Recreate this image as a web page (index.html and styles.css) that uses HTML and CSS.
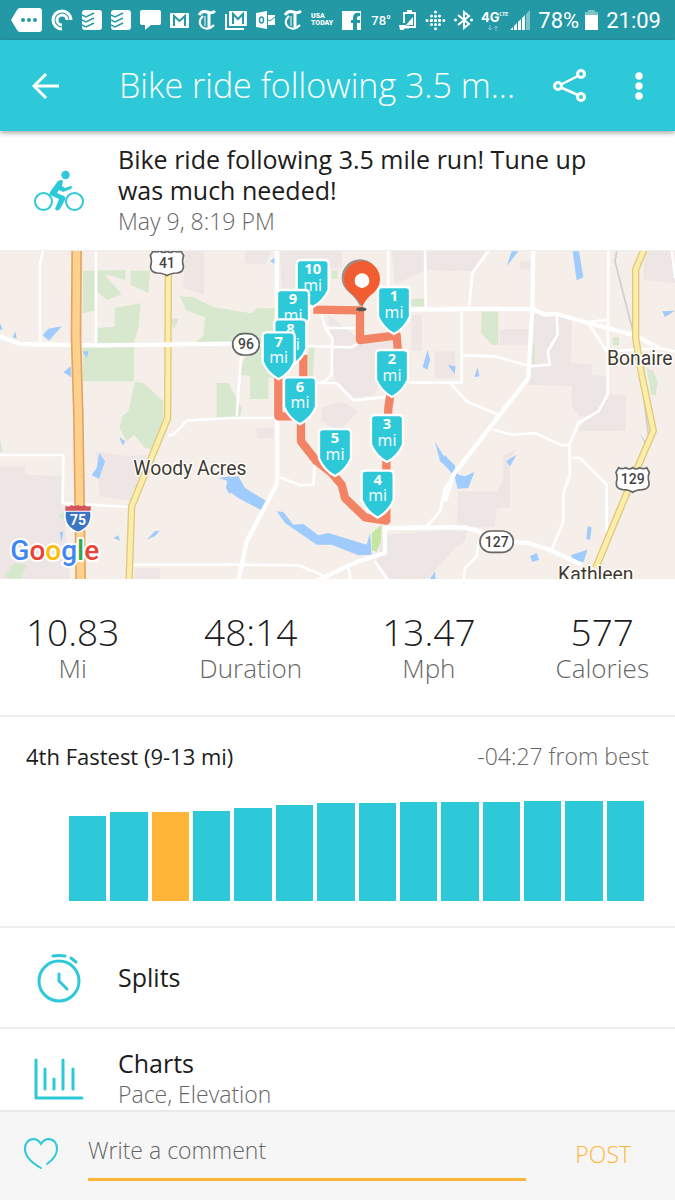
FILE: index.html
```html
<!DOCTYPE html>
<html lang="en">
<head>
  <meta charset="UTF-8">
  <meta name="viewport" content="width=device-width, initial-scale=1.0">
  <title>Bike ride following 3.5 mile run!</title>
  <link rel="stylesheet" href="styles.css">
</head>
<body>

  <div class="status-bar">
    <div class="status-group">
      <svg width="31" height="24" viewBox="0 0 31 24"><path fill="#fff" d="M9 0h19q3 0 3 3v18q0 3-3 3H9q-2 0-3-2L0 12 6 2q1-2 3-2z"/><g fill="#2499a6"><circle cx="12" cy="12" r="2"/><circle cx="18" cy="12" r="2"/><circle cx="24" cy="12" r="2"/></g></svg>
      <svg width="22" height="22" viewBox="0 0 22 22" fill="none" stroke="#fff" stroke-width="3"><path d="M20 11A9 9 0 1 0 11 20"/><path d="M16 11a5 5 0 1 0-5 5"/></svg>
      <svg width="20" height="20" viewBox="0 0 20 20"><rect width="20" height="20" rx="3" fill="#fff"/><path d="M0 5l4 2 8-4M0 10l4 2 8-4M0 15l4 2 8-4" fill="none" stroke="#2499a6" stroke-width="1.5"/></svg>
      <svg width="20" height="20" viewBox="0 0 20 20"><rect width="20" height="20" rx="3" fill="#fff"/><path d="M0 5l4 2 8-4M0 10l4 2 8-4M0 15l4 2 8-4" fill="none" stroke="#2499a6" stroke-width="1.5"/></svg>
      <svg width="21" height="20" viewBox="0 0 21 20"><path fill="#fff" d="M2 0h17q2 0 2 2v11q0 2-2 2h-8l-6 5v-5H2q-2 0-2-2V2q0-2 2-2z"/></svg>
      <svg width="19" height="15" viewBox="0 0 19 15"><rect width="19" height="15" rx="1" fill="#fff"/><path d="M4 13V3l5.500 5L15 3v10" fill="none" stroke="#2499a6" stroke-width="2"/></svg>
      <svg width="18" height="20" viewBox="0 0 18 20" fill="none" stroke="#fff"><path d="M1 5q3-5 8-3 5 2 8-1" stroke-width="3"/><path d="M5 6q-6 6-1 11 6 4 12-2" stroke-width="2"/><path d="M11 4v13" stroke-width="3"/><path d="M7 6v10" stroke-width="1"/></svg>
      <svg width="22" height="19" viewBox="0 0 22 19"><path d="M1 3v15h18" fill="none" stroke="#fff" stroke-width="2"/><rect x="4" width="18" height="15" rx="1" fill="#fff"/><path d="M8 13V3l5 5 5-5v10" fill="none" stroke="#2499a6" stroke-width="2"/></svg>
      <svg width="19" height="18" viewBox="0 0 19 18"><path fill="#fff" d="M0 2l11-2v18L0 16zM12 4h7v10h-7z"/><ellipse cx="5.500" cy="9" rx="2" ry="3" fill="none" stroke="#2499a6" stroke-width="1.500"/><path d="M12 9l2 1 5-4" fill="none" stroke="#2499a6"/></svg>
      <svg width="18" height="20" viewBox="0 0 18 20" fill="none" stroke="#fff"><path d="M1 5q3-5 8-3 5 2 8-1" stroke-width="3"/><path d="M5 6q-6 6-1 11 6 4 12-2" stroke-width="2"/><path d="M11 4v13" stroke-width="3"/><path d="M7 6v10" stroke-width="1"/></svg>
      <span class="usa">USA<br>TODAY</span>
      <svg width="19" height="19" viewBox="0 0 19 19"><path fill="#fff" d="M0 0h19v19h-4v-7h3V9h-3V7q0-2 3-2V2q-7-1-7 5v2H9v3h2v7H0z"/></svg>
    </div>
    <div class="status-group system">
      <span class="temp">78°</span>
      <svg width="18" height="21" viewBox="0 0 18 21"><path d="M5 13V3h11v14H9M8 1h5" fill="none" stroke="#fff" stroke-width="2"/><path d="M14 7v8H7zM0 15h5q3 0 3 3h3M0 15h5v5H1z" fill="#fff"/><path d="M5 17h5" stroke="#fff" stroke-width="3"/></svg>
      <svg width="21" height="21" viewBox="0 0 21 21" fill="none" stroke="#fff" stroke-linecap="round" stroke-width="3"><path d="M10.500 2v18" stroke-dasharray="0 4.200"/><path d="M6.500 6v10M14.500 6v10" stroke-dasharray="0 4.200"/><path d="M2 10.500h18" stroke-dasharray="0 4.200"/></svg>
      <svg width="19" height="20" viewBox="0 0 19 20"><path d="M4 5l11 9-5 4V2l5 4-11 9" fill="none" stroke="#fff" stroke-width="2"/><circle cx="1.500" cy="10" r="1.500" fill="#fff"/><circle cx="17.500" cy="10" r="1.500" fill="#fff"/></svg>
      <div class="signal">
        <div class="network">
          <span class="lte">4G<small>LTE</small></span>
          <svg width="12" height="6" viewBox="0 0 12 6" fill="none" stroke="#7cc3ca"><path d="M3 0v5M1 3l2 2 2-2M9 6V1M7 3l2-2 2 2"/></svg>
        </div>
        <svg width="20" height="20" viewBox="0 0 20 20"><path fill="#fff" d="M0 20l3-3v3zM4 16l3-3v7H4zM8 12l3-3v11H8zM12 8l3-3v15h-3z"/><path fill="#7cc3ca" d="M16 4l4-4v20h-4z"/></svg>
      </div>
      <div class="battery">
        <span>78%</span>
        <svg width="13" height="20" viewBox="0 0 13 20"><path fill="#7cc3ca" d="M3 0h7v2h3v4H0V2h3z"/><path fill="#fff" d="M0 5h13v15H0z"/></svg>
      </div>
      <span>21:09</span>
    </div>
  </div>

  <header class="app-bar">
    <button class="icon-btn" aria-label="Back">
      <svg width="28" height="28" viewBox="0 0 28 28" fill="none" stroke="#fff" stroke-width="3"><path d="M14 2L2 14l12 12M2 14h25"/></svg>
    </button>
    <h1 class="app-title">Bike ride following 3.5 m...</h1>
    <button class="icon-btn" aria-label="Share">
      <svg width="34" height="34" viewBox="0 0 34 34" fill="none" stroke="#fff" stroke-width="3"><circle cx="5" cy="17" r="3.500"/><circle cx="28" cy="5" r="3.500"/><circle cx="28" cy="28" r="3.500"/><path d="M8 15.500L25 7M8 18.500L25 26" stroke-width="2.500"/></svg>
    </button>
    <button class="icon-btn" aria-label="More options">
      <svg width="8" height="28" viewBox="0 0 8 28" fill="#fff"><circle cx="4" cy="4" r="3.700"/><circle cx="4" cy="14" r="3.700"/><circle cx="4" cy="24" r="3.700"/></svg>
    </button>
  </header>

  <main class="scroll">
    <section class="row activity">
      <span class="row-icon">
        <svg width="50" height="42" viewBox="0 0 50 42" fill="none" stroke="#2ec9d8">
          <circle cx="9.500" cy="31.500" r="8.500" stroke-width="2"/><circle cx="40.500" cy="31.500" r="8.500" stroke-width="2"/>
          <circle cx="31.500" cy="5" r="4.200" fill="#2ec9d8" stroke="none"/>
          <path d="M16 22l8-11q3-2 5 0l-1 5 3 2 6-2q2 1 0 3l-8 3-4-2-2 3 7 3q2 1 1 4l-5 9q-3 3-5 0l4-10-9-4q-1-1 0-3z" fill="#2ec9d8" stroke="none"/>
        </svg>
      </span>
      <div>
        <h2 class="row-title">Bike ride following 3.5 mile run! Tune up was much needed!</h2>
        <p class="row-sub">May 9, 8:19 PM</p>
      </div>
    </section>

    <!-- Route map -->
    <svg class="map" viewBox="0 0 2025 984" role="img" aria-label="Route map">
      <defs>
        <path id="marker" d="M-36-141h72q12 0 12 12v76Q34-18 0 0-34-18-48-53v-76q0-12 12-12z"/>
        <path id="us-shield" d="M-42-34q10 6 21 0 11 8 21 0 10 8 21 0 11 6 21 0l8 14q-6 16-1 30 2 20-20 22-20 1-29 8-9-7-29-8-22-2-20-22 5-14-1-30z"/>
      </defs>
      <rect width="2025" height="984" fill="#f6eee8"/>

      <g class="built">
        <path transform="translate(0 -9)" d="M555 10h57v130l-62-20zM0 655h75v25l113 5 2 90 20 225H0zM288 610l97 15 55-5-40 140-100-15zM405 960h75v40h-75z"/>
        <path transform="translate(675 -9)" d="M165 10h185v50l-50 5-60 60h-70zM60 10h80l-20 40-60-5zM310 200l100 80 110-20-70 180-60 10-60-50zM475 860l215-15v55l-90 100H500l-45-60zM500 10h190v60l-90-5-90 45zM560 200h30v110h100v80h-60v-80h-70zM290 480l60-20 50 30-60 60-50-30zM95 540h50v30H95z"/>
        <path transform="translate(1335 -9)" d="M0 10h120L80 70 0 65zM600 10h90v95l-95-10zM265 190l65 15 50 5-2 135 62 5 2 30 46 5-3 55h57v108l-144 2 32-45h-30l-20-35v-55l-130-5zM40 730h115l20-30v-75l40-25-20 40v138l-40 2-5 58H35zM165 243h85v47h-85zM0 850h65l-5 30-60 40zM225 40h30v24h-30z"/>
      </g>

      <g class="green">
        <path transform="translate(0 -9)" d="M248 68l128-2v30l-64-18 53 60-42 18-37-28-2 60-36 8zM392 68h58l-5 67-53-25zM345 180l77-14-7 74-15 48H290v-48l53-4zM248 298h154v102H248zM405 402l25 3 60 55v50l-25 95-30-5-33-40-22 20-22-40 10-35 17-15zM540 145l40 2 60 31 115 18 15-15h55v110l-80 15-60-18H580l30-25 5-55-55-20zM650 405h35l40 75-5 30h-70zM515 212h22l-17 33zM10 985l35-40 35 5-20 50zM0 572l8 40H0zM175 800l18-8v30z"/>
        <path transform="translate(675 -9)" d="M70 300h80v90h-20v63H75v-70l-35-3zM250 300l20-10-8 110h-12zM550 155l50-5v25h-50zM320 68h18v24h-18z"/>
        <path transform="translate(1335 -9)" d="M110 190h50v100h-20l-32-35zM262 290h8v60h-12zM503 268h19v24h-19zM605 360l20 10 13 30-6 42-14-2z"/>
        <path transform="translate(675 -9)" fill="#c5e5a5" d="M440 855l30-25-2 50-13 32-15-7z"/>
      </g>

      <g class="water">
        <path transform="translate(0 -9)" d="M128 262l17-20 40-7-38 43zM248 310h18l-6 20zM190 373l22-18 2 33zM298 615l17 25-18 52-22-10 15-22zM358 568l18 12-8 12zM179 852h11l-6 30zM340 870l15-8 5 16zM440 875l25-25 14-2-14 17zM0 225l8 20H0zM38 268l8-18 4 22zM655 690l35-5v55l-12-20 4-22z"/>
        <path transform="translate(675 -9)" d="M0 690l40-5 20 35 65 40-10 30-75-40-35-25 5-20zM155 790l20 2 30 38 30-2 45 34 30-7 115 35 10-35 5 65-40 2-80-32h-45l-95-65zM608 305l7 30-8 30-14-8zM630 582l25 40 35 30v28l-45-40zM135 40l15-12v20zM610 1000l20-30 2 30zM670 350l20 10v18z"/>
        <path transform="translate(1335 -9)" d="M383 10h19l13 78-20 9zM200 10h20l-35 45zM652 190l38-2-30 19zM10 352l22 3-4 22zM98 358l5 27-15 3zM0 620l30 40 10 20 20 5 28-13-18 48-32 2-8-32-30-40zM183 640l32-20-20 35zM585 558l15 22v7zM428 835l12 3-5 39-11-5zM255 925l20-10 7 20-20 7zM380 920l48-15-13 38-37-8z"/>
      </g>

      <g class="streets">
        <path transform="translate(0 -9)" d="M130 0l-10 50v238M288 0v288M0 621h190l-2 144 197 12M505 562l15-2 42-43 128-7h135M400 950h290"/>
        <path transform="translate(675 -9)" d="M0 287l380 11 20-13M490 0v115M600 0l2 184M290 200l10 40 22 30-2 110-20 20-25 5h60l50 52 115-12M300 240h90M550 404h140M50 300L35 505M165 688l60 24 40-2 5-70M0 950l220 2 80 33M690 680l-30 40-15 70-40 45M450 940l40 60M370 960l8 40"/>
        <path transform="translate(1335 -9)" d="M130 10L82 75 72 180M335 200l3 60-30 50 7 40-65 5M50 190v214H0M55 322l95 3 95 27M15 404l50 56 95 40M145 545l55 15 70-5 80 37h20M490 0l-2 440-28 50-60 35-27 67 2 88-20 55v85l-35 85M380 630h25l80 80v140M430 225l55 85M430 222l60-7M490 310l150-10 50 10M100 880l-5 45-35 35-5 40M680 0l10 90"/>
      </g>
      <g class="streets main">
        <path transform="translate(0 -9)" d="M0 265l60 23 240 4 390-5"/>
        <path transform="translate(675 -9)" d="M155 0l2 680-2 30-90 170-25 120M270 1000l130-60 80-25v-75l210-2M540 184h150"/>
        <path transform="translate(1335 -9)" d="M265 0l-3 185-12 205L25 680 0 760M0 183h262l38 17 35-2 95 27 140 37 70 38M0 838h60l45 12 15 30 130 5 70 23 90 42"/>
      </g>
      <path class="rail" transform="translate(1335 -9)" d="M515 10l-5 30 55 215M590 400l20 160"/>

      <g fill="none" stroke-linejoin="round">
        <g stroke="#dfc97f" stroke-width="22">
          <path d="M505 60l-2 441-108 265-8 230"/>
          <path d="M1938-20l-31 76v205l18 110 35 168-65 152-108 260"/>
        </g>
        <g stroke="#fceea8" stroke-width="14">
          <path d="M505 60l-2 441-108 265-8 230"/>
          <path d="M1938-20l-31 76v205l18 110 35 168-65 152-108 260"/>
        </g>
        <path d="M230 0l-2 260 7 230 7 500" stroke="#e5a465" stroke-width="32"/>
        <path d="M230 0l-2 260 7 230 7 500" stroke="#fed18c" stroke-width="22"/>
        <path d="M490 281h30" stroke="#fff" stroke-width="14"/>
      </g>

      <g class="place">
        <text x="400" y="671">Woody Acres</text>
        <text x="1821" y="343">Bonaire</text>
        <text x="1674" y="990">Kathleen</text>
      </g>

      <g class="shield">
        <use href="#us-shield" x="501" y="34"/><text x="501" y="50">41</text>
        <use href="#us-shield" x="1898" y="684"/><text x="1898" y="700">129</text>
        <rect x="698" y="248" width="80" height="64" rx="32"/><text x="738" y="295">96</text>
        <rect x="1440" y="840" width="100" height="64" rx="32"/><text x="1490" y="887">127</text>
      </g>
      <path fill="#3b75c3" stroke="#fff" stroke-width="4" d="M196 780h76q8 48-38 64-46-16-38-64z"/>
      <path fill="#d2555c" d="M196 764q10 6 18-2 10 6 20 0 10 6 20 0 8 8 18 2v15h-76z"/>
      <text class="interstate" x="234" y="823">75</text>

      <text class="google" x="31" y="928"><tspan fill="#4285f4">G</tspan><tspan fill="#ea4335">o</tspan><tspan fill="#fbbc05">o</tspan><tspan fill="#4285f4">g</tspan><tspan fill="#34a853">l</tspan><tspan fill="#ea4335">e</tspan></text>

      <g transform="translate(675 -9)">
        <path class="route" d="M265 185l140 2v89l110-14 3 38-28 180-6 170v168l-64-10-60-58-10-40-30-35-45-35-47-60v-70M235 320v80M160 390v115h50"/>
        <ellipse cx="409" cy="184" rx="15" ry="6" fill="#555"/>
        <path fill="#9b8f8c" d="M405 174q-12-24-34-42a55 55 0 1 1 68 0z"/>
        <path fill="#f15d30" d="M411 178q-10-26-35-44a54 54 0 1 1 70 0q-25 18-35 44z"/>
        <circle cx="411" cy="98" r="22" fill="#fff"/>
        <g class="mile">
          <g transform="translate(263 177)"><use href="#marker"/><text y="-98" class="num">10</text><text y="-49">mi</text></g>
          <g transform="translate(204 267)"><use href="#marker"/><text y="-98" class="num">9</text><text y="-49">mi</text></g>
          <g transform="translate(196 355)"><use href="#marker"/><text y="-98" class="num">8</text><text y="-49">mi</text></g>
          <g transform="translate(161 394)"><use href="#marker"/><text y="-98" class="num">7</text><text y="-49">mi</text></g>
          <g transform="translate(225 529)"><use href="#marker"/><text y="-98" class="num">6</text><text y="-49">mi</text></g>
          <g transform="translate(330 684)"><use href="#marker"/><text y="-98" class="num">5</text><text y="-49">mi</text></g>
          <g transform="translate(458 809)"><use href="#marker"/><text y="-98" class="num">4</text><text y="-49">mi</text></g>
          <g transform="translate(486 642)"><use href="#marker"/><text y="-98" class="num">3</text><text y="-49">mi</text></g>
          <g transform="translate(501 447)"><use href="#marker"/><text y="-98" class="num">2</text><text y="-49">mi</text></g>
          <g transform="translate(507 258)"><use href="#marker"/><text y="-98" class="num">1</text><text y="-49">mi</text></g>
        </g>
      </g>
    </svg>

    <section class="stats">
      <div class="stat"><span class="value">10.83</span><span class="label">Mi</span></div>
      <div class="stat"><span class="value">48:14</span><span class="label">Duration</span></div>
      <div class="stat"><span class="value">13.47</span><span class="label">Mph</span></div>
      <div class="stat"><span class="value">577</span><span class="label">Calories</span></div>
    </section>

    <section class="ranking">
      <div class="ranking-head">
        <span class="rank">4th Fastest (9-13 mi)</span>
        <span class="muted">-04:27 from best</span>
      </div>
      <div class="bars">
        <div class="bar" style="height: 85%"></div>
        <div class="bar" style="height: 89%"></div>
        <div class="bar current" style="height: 89%"></div>
        <div class="bar" style="height: 90%"></div>
        <div class="bar" style="height: 93%"></div>
        <div class="bar" style="height: 96%"></div>
        <div class="bar" style="height: 98%"></div>
        <div class="bar" style="height: 98%"></div>
        <div class="bar" style="height: 99%"></div>
        <div class="bar" style="height: 99%"></div>
        <div class="bar" style="height: 99%"></div>
        <div class="bar" style="height: 100%"></div>
        <div class="bar" style="height: 100%"></div>
        <div class="bar" style="height: 100%"></div>
      </div>
    </section>

    <a class="row link" href="#splits">
      <span class="row-icon">
        <svg width="50" height="50" viewBox="0 0 50 50" fill="none" stroke="#2ec9d8" stroke-width="3" stroke-linecap="round"><circle cx="25" cy="28" r="20"/><path d="M25 21v7l8 8M19 3q6-1 12 0M37 5l5 4"/></svg>
      </span>
      <span class="row-title">Splits</span>
    </a>

    <a class="row link" href="#charts">
      <span class="row-icon">
        <svg width="50" height="42" viewBox="0 0 50 42" fill="none" stroke="#2ec9d8" stroke-width="3" stroke-linecap="round"><path d="M2 2v38h46M11 11v20M20 21v10M29 2v29M39 11v20" stroke-linejoin="round"/></svg>
      </span>
      <div>
        <div class="row-title">Charts</div>
        <div class="row-sub">Pace, Elevation</div>
      </div>
    </a>
  </main>

  <form class="comment-bar">
    <button type="button" class="icon-btn" aria-label="Like">
      <svg width="34" height="32" viewBox="0 0 34 32" fill="none" stroke="#2ec9d8" stroke-width="2" stroke-linecap="round"><path d="M17 30Q1 21 1 11 1 2 9 1q5 0 8 5 3-5 8-5 8 1 8 10 0 8-10 15"/></svg>
    </button>
    <input type="text" class="comment-input" aria-label="Write a comment" placeholder="Write a comment">
    <button type="submit" class="post-btn">POST</button>
  </form>

</body>
</html>
```
FILE: styles.css
```css
* {
  box-sizing: border-box;
}

body {
  margin: 0;
  height: 100vh;
  display: flex;
  flex-direction: column;
  background: #fff;
  color: #1c1c1c;
  font-family: "Open Sans", "Noto Sans", sans-serif;
  font-weight: 300;
  overflow: hidden;
}

h1, h2, p {
  margin: 0;
  font-weight: inherit;
}

svg {
  display: block;
  flex-shrink: 0;
}

button {
  border: 0;
  padding: 0;
  background: none;
  font: inherit;
  cursor: pointer;
}

/* Status bar */
.status-bar {
  flex: none;
  display: flex;
  justify-content: space-between;
  align-items: center;
  height: 40px;
  padding: 0 14px 0 11px;
  background: #2499a6;
  color: #fff;
  font: 400 22px Roboto, sans-serif;
}

.status-group {
  display: flex;
  align-items: center;
  gap: 9px;
}

.status-group.system {
  gap: 8px;
}

.usa {
  font-size: 7px;
  font-weight: 900;
  line-height: 7px;
}

.temp {
  font-size: 13px;
  font-weight: 500;
}

.signal {
  display: flex;
  align-items: center;
  gap: 2px;
}

.network svg {
  margin-left: 6px;
}

.lte {
  display: flex;
  font: bold 13px/16px Inter, sans-serif;
}

.lte small {
  font-size: 5px;
  line-height: 10px;
}

.battery {
  display: flex;
  align-items: center;
  gap: 6px;
}

/* App bar */
.app-bar {
  flex: none;
  position: relative;
  z-index: 1;
  display: flex;
  align-items: center;
  height: 91px;
  padding: 0 32px;
  background: #2ec9d8;
  color: #fff;
  box-shadow: 0 2px 5px rgba(0, 0, 0, 0.35);
}

.app-title {
  flex: 1;
  min-width: 0;
  margin: 0 32px 0 59px;
  padding-bottom: 2px;
  overflow: hidden;
  white-space: nowrap;
  text-overflow: ellipsis;
  font-size: 34px;
}

.app-bar .icon-btn:last-child {
  margin-left: 48px;
}

.scroll {
  flex: 1;
  min-height: 0;
  overflow-y: auto;
  scrollbar-width: none;
}

/* Rows */
.row {
  display: flex;
  align-items: center;
  border-bottom: 2px solid #eee;
  color: inherit;
  text-decoration: none;
}

.row-icon {
  width: 118px;
  padding-left: 34px;
  flex-shrink: 0;
}

.row-title {
  font-size: 25px;
  font-weight: 400;
  line-height: 31px;
}

.row-sub {
  font-size: 23px;
  line-height: 31px;
  color: #666;
}

.activity {
  padding: 13px 48px 13px 0;
  border-bottom-width: 1px;
}

.link {
  min-height: 101px;
}

/* Map */
.map {
  width: 100%;
  height: auto;
}

.built {
  fill: #eee5e5;
}

.green {
  fill: #d7e8cf;
}

.water {
  fill: #9fcbfd;
}

.streets {
  fill: none;
  stroke: #fff;
  stroke-width: 8;
  stroke-linejoin: round;
}

.streets.main {
  stroke-width: 13;
}

.rail {
  fill: none;
  stroke: #cfcfcb;
  stroke-width: 5;
}

.place text {
  font: 400 58px Roboto, sans-serif;
  fill: #3f3a2f;
  stroke: #fff;
  stroke-width: 8;
  stroke-linejoin: round;
  paint-order: stroke;
}

.shield use, .shield rect {
  fill: #fff;
  stroke: #666;
  stroke-width: 5;
}

.shield text, .interstate {
  font: 500 42px Roboto, sans-serif;
  text-anchor: middle;
  fill: #444;
}

.interstate {
  fill: #fff;
  font-weight: 700;
}

.google {
  font: 500 84px Roboto, sans-serif;
  stroke: #fff;
  stroke-width: 12;
  stroke-linejoin: round;
  paint-order: stroke;
}

.route {
  fill: none;
  stroke: #f28465;
  stroke-width: 25;
  stroke-linejoin: round;
}

.mile use {
  fill: #2ec9d8;
  stroke: #fff;
  stroke-width: 7;
}

.mile text {
  font: 400 48px "Open Sans", sans-serif;
  text-anchor: middle;
  fill: #fff;
}

.mile .num {
  font-size: 44px;
  font-weight: 700;
}

/* Stats */
.stats {
  display: flex;
  justify-content: space-between;
  padding: 32px 26px;
  border-bottom: 2px solid #eee;
}

.stat {
  display: flex;
  flex-direction: column;
  align-items: center;
}

.value {
  font-size: 37px;
  line-height: 42px;
}

.label {
  font-size: 26px;
  line-height: 30px;
  color: #666;
}

/* Ranking chart */
.ranking {
  padding: 24px 26px 25px;
  border-bottom: 2px solid #eee;
}

.ranking-head {
  display: flex;
  justify-content: space-between;
  font-size: 23px;
  line-height: 30px;
}

.rank {
  font-size: 22px;
  font-weight: 400;
}

.muted {
  color: #666;
}

.bars {
  display: flex;
  align-items: flex-end;
  gap: 4px;
  height: 100px;
  margin: 30px 5px 0 43px;
}

.bar {
  flex: 1;
  background: #2ec9d8;
}

.bar.current {
  background: #ffb638;
}

/* Comment bar */
.comment-bar {
  flex: none;
  display: flex;
  align-items: center;
  height: 90px;
  padding: 0 44px 4px 24px;
  background: #f6f6f6;
  border-top: 2px solid #e9e9e9;
}

.comment-input {
  flex: 1;
  min-width: 0;
  height: 54px;
  margin: 0 49px 0 30px;
  padding: 0 0 6px;
  border: 0;
  border-bottom: 3px solid #ffb638;
  outline: none;
  background: none;
  color: #1c1c1c;
  font: inherit;
  font-size: 23px;
}

.comment-input::placeholder {
  color: #666;
  opacity: 1;
}

.post-btn {
  color: #ffb638;
  font-size: 23px;
}
```
